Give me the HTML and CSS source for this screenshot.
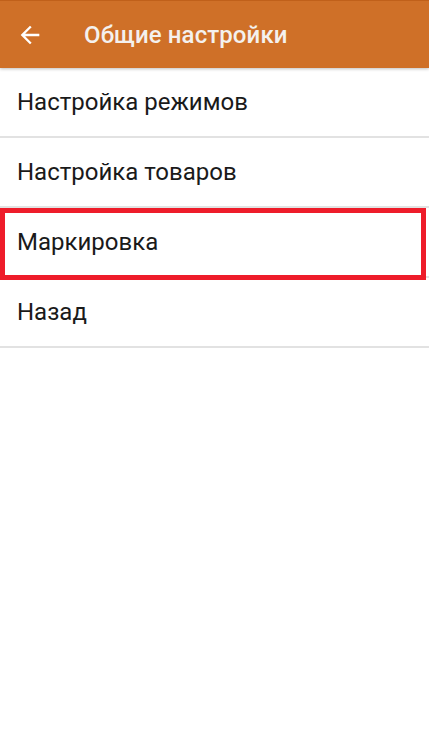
FILE: index.html
```html
<!DOCTYPE html>
<html lang="ru">
<head>
<meta charset="utf-8">
<link rel="stylesheet" href="styles.css">
</head>
<body>
<header class="appbar">
  <svg class="back" width="28" height="28" viewBox="0 0 24 24"><path d="M20 11H7.83l5.59-5.59L12 4l-8 8 8 8 1.41-1.41L7.83 13H20v-2z" fill="#fff"/></svg>
  <h1 class="title">Общие настройки</h1>
</header>
<ul class="menu">
  <li class="item">Настройка режимов</li>
  <li class="item">Настройка товаров</li>
  <li class="item item-marked">Маркировка<span class="highlight"></span></li>
  <li class="item">Назад</li>
</ul>
</body>
</html>
```
FILE: styles.css
```css
html, body { margin: 0; padding: 0; background: #fff; }
body { font-family: Roboto, "Noto Sans", sans-serif; width: 429px; height: 740px; overflow: hidden; }
.appbar {
  height: 67px;
  background: #cf7028;
  border-top: 1px solid #c0601a;
  display: flex;
  align-items: center;
  box-shadow: 0 1px 3px rgba(0,0,0,0.25);
  position: relative;
  z-index: 1;
}
.back { margin-left: 16px; width: 28px; height: 28px; }
.title {
  margin: 0 0 0 40px;
  color: #f4f1ee;
  font-size: 24px;
  font-weight: 500;
  letter-spacing: 0.1px;
}
.menu { list-style: none; margin: 0; padding: 0; }
.item {
  position: relative;
  height: 68px;
  border-bottom: 2px solid #e2e2e2;
  display: flex;
  align-items: center;
  padding-left: 17px;
  font-size: 24px;
  color: #1a1a1a;
}
.highlight {
  position: absolute;
  top: 0;
  left: 0;
  right: 3px;
  height: 62px;
  border: 5px solid #ee1c2a;
}
```
